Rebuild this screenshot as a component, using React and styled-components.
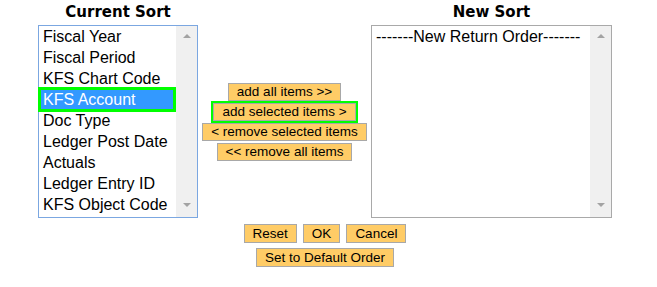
import React from 'react'
import styled, { createGlobalStyle } from 'styled-components'

const GlobalStyle = createGlobalStyle`
  html, body {
    margin: 0;
    padding: 0;
    background: #ffffff;
  }
  body {
    font-family: "Liberation Sans", Arial, sans-serif;
    color: #000000;
  }
`

const currentItems = [
  'Fiscal Year',
  'Fiscal Period',
  'KFS Chart Code',
  'KFS Account',
  'Doc Type',
  'Ledger Post Date',
  'Actuals',
  'Ledger Entry ID',
  'KFS Object Code',
]

const App = () => {
  return (
    <>
      <GlobalStyle />
      <Page>
        <SortTable>
          <Heading>Current Sort</Heading>
          <span />
          <Heading>New Sort</Heading>

          <ListBox $focused>
            <Options>
              {currentItems.map((item) => (
                <Option key={item} $selected={item === 'KFS Account'}>{item}</Option>
              ))}
            </Options>
            <ScrollBar>
              <Arrow $up />
              <Arrow />
            </ScrollBar>
          </ListBox>

          <MoveButtons>
            <SortButton>add all items &gt;&gt;</SortButton>
            <SortButton $marked>add selected items &gt;</SortButton>
            <SortButton>&lt; remove selected items</SortButton>
            <SortButton>&lt;&lt; remove all items</SortButton>
          </MoveButtons>

          <ListBox>
            <Options>
              <Option>-------New Return Order-------</Option>
            </Options>
            <ScrollBar>
              <Arrow $up />
              <Arrow />
            </ScrollBar>
          </ListBox>
        </SortTable>

        <Footer>
          <ButtonRow>
            <SortButton $big>Reset</SortButton>
            <SortButton $big>OK</SortButton>
            <SortButton $big>Cancel</SortButton>
          </ButtonRow>
          <ButtonRow>
            <SortButton $big>Set to Default Order</SortButton>
          </ButtonRow>
        </Footer>
      </Page>
    </>
  )
}

export default App

const Page = styled.div`
  padding: 4px 0 0 38px;
  width: 574px;
`

const SortTable = styled.div`
  display: grid;
  grid-template-columns: 160px 173px 241px;
  grid-template-rows: 21px 193px;
  align-items: center;
`

const Heading = styled.div`
  align-self: start;
  text-align: center;
  font-family: "DejaVu Sans", Verdana, sans-serif;
  font-weight: bold;
  font-size: 15px;
  line-height: 17px;
`

const ListBox = styled.div`
  box-sizing: border-box;
  height: 193px;
  display: flex;
  border: 1px solid ${(p) => (p.$focused ? '#7ba7e1' : '#a9a9a9')};
  background: #ffffff;
`

const Options = styled.div`
  flex: 1;
  min-width: 0;
  display: flex;
  flex-direction: column;
`

const Option = styled.div`
  position: relative;
  height: 21px;
  line-height: 21px;
  padding-left: 4px;
  font-size: 16px;
  white-space: nowrap;
  background: ${(p) => (p.$selected ? '#3399ff' : 'transparent')};
  color: ${(p) => (p.$selected ? '#ffffff' : '#000000')};

  ${(p) => p.$selected && `
    &::after {
      content: '';
      position: absolute;
      top: -2px;
      bottom: -2px;
      left: -1px;
      right: 0;
      border: 3px solid #00ff00;
    }
  `}
`

const ScrollBar = styled.div`
  width: 21px;
  flex: none;
  background: #f0f0f0;
  display: flex;
  flex-direction: column;
  justify-content: space-between;
  align-items: center;
  padding: 8px 0 10px;
  box-sizing: border-box;
`

const Arrow = styled.div`
  width: 0;
  height: 0;
  border-left: 4px solid transparent;
  border-right: 4px solid transparent;
  ${(p) => (p.$up ? 'border-bottom: 4px solid #a3a3a3;' : 'border-top: 4px solid #a3a3a3;')}
`

const MoveButtons = styled.div`
  display: flex;
  flex-direction: column;
  align-items: center;
  gap: 2px;
`

const SortButton = styled.button`
  box-sizing: border-box;
  height: ${(p) => (p.$big ? '19px' : '18px')};
  padding: 0 8px;
  border: 1px solid #a8a8a8;
  border-radius: 0;
  background: #ffcc66;
  color: #000000;
  font-family: "Liberation Sans", Arial, sans-serif;
  font-size: 13.5px;
  line-height: 16px;
  cursor: pointer;
  outline: ${(p) => (p.$marked ? '2px solid #00ff00' : 'none')};
`

const Footer = styled.div`
  display: flex;
  flex-direction: column;
  align-items: center;
  gap: 5px;
  margin-top: 6px;
`

const ButtonRow = styled.div`
  display: flex;
  gap: 6px;
`
